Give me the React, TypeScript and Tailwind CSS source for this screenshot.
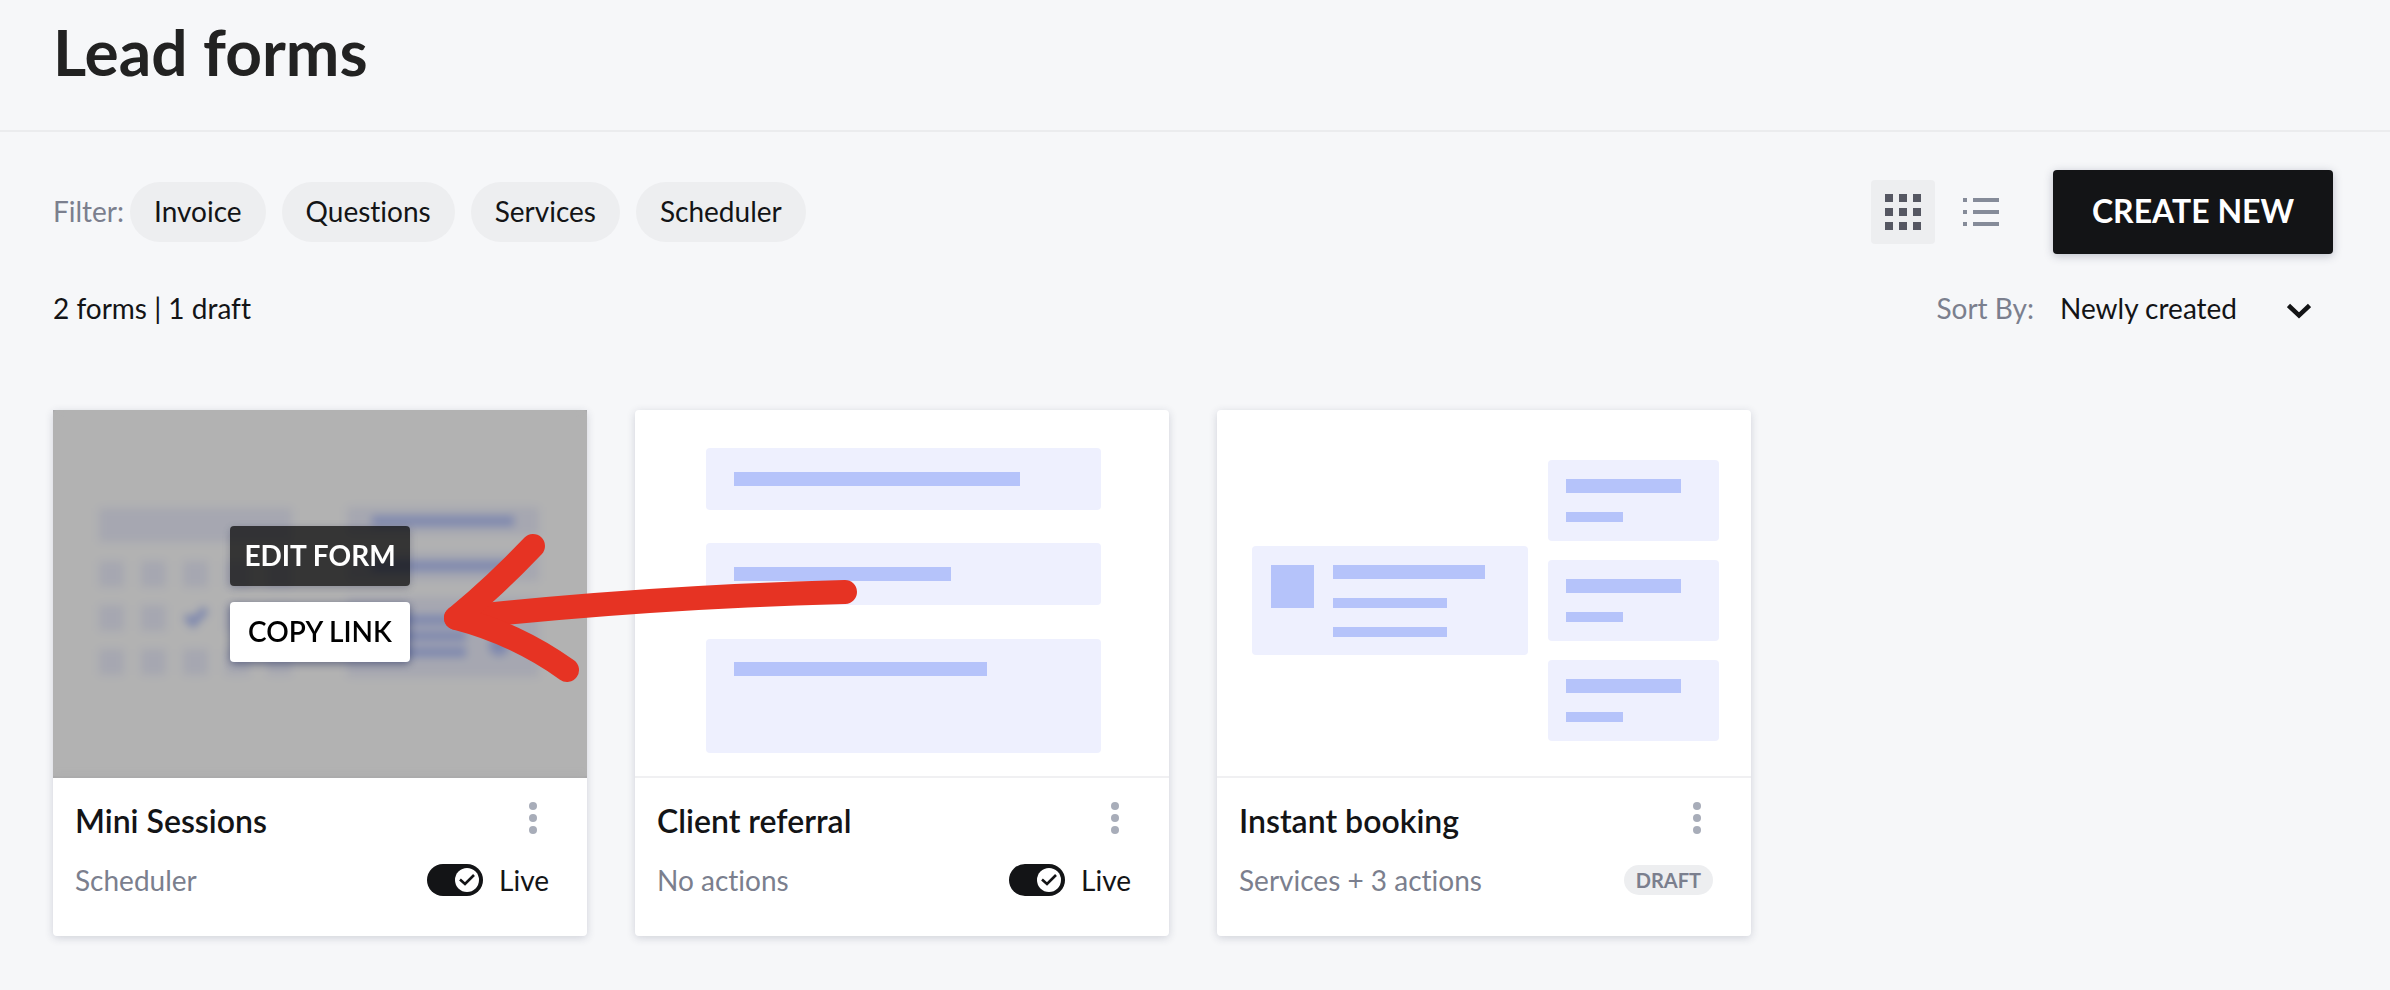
import { useState } from "react";
import type { ReactNode } from "react";

const filters = ["Invoice", "Questions", "Services", "Scheduler"];

function SchedulerPreview() {
  const columns = [46, 88, 130, 172, 214];
  const rows = [151, 195, 239];

  return (
    <svg viewBox="0 0 534 366" className="block w-full" aria-hidden="true">
      <rect x="46" y="98" width="193" height="34" fill="#eef0fe" />
      {rows.map((y) =>
        columns.map((x) =>
          x === 130 && y === 195 ? null : (
            <rect key={`${x}-${y}`} x={x} y={y} width="25" height="26" fill="#eef0fe" />
          )
        )
      )}
      <path d="M133 206l7 7 13-14" fill="none" stroke="#b5c3fa" strokeWidth="8" />
      <rect x="294" y="97" width="192" height="28" fill="#eef0fe" />
      <rect x="319" y="106" width="142" height="10" fill="#b5c3fa" />
      <rect x="294" y="142" width="192" height="29" fill="#eef0fe" />
      <rect x="319" y="151" width="142" height="10" fill="#b5c3fa" />
      <rect x="294" y="187" width="192" height="80" fill="#eef0fe" />
      <rect x="319" y="205" width="106" height="10" fill="#b5c3fa" />
      <rect x="319" y="221" width="94" height="10" fill="#b5c3fa" />
      <rect x="319" y="237" width="94" height="10" fill="#b5c3fa" />
      <circle cx="446" cy="236" r="10" fill="#b5c3fa" />
    </svg>
  );
}

function QuestionsPreview() {
  return (
    <svg viewBox="0 0 534 366" className="block w-full" aria-hidden="true">
      <rect x="71" y="38" width="395" height="62" rx="4" fill="#eef0fe" />
      <rect x="99" y="62" width="286" height="14" fill="#b5c3fa" />
      <rect x="71" y="133" width="395" height="62" rx="4" fill="#eef0fe" />
      <rect x="99" y="157" width="217" height="14" fill="#b5c3fa" />
      <rect x="71" y="229" width="395" height="114" rx="4" fill="#eef0fe" />
      <rect x="99" y="252" width="253" height="14" fill="#b5c3fa" />
    </svg>
  );
}

function BookingPreview() {
  return (
    <svg viewBox="0 0 534 366" className="block w-full" aria-hidden="true">
      <rect x="35" y="136" width="276" height="109" rx="4" fill="#eef0fe" />
      <rect x="54" y="155" width="43" height="43" fill="#b5c3fa" />
      <rect x="116" y="155" width="152" height="14" fill="#b5c3fa" />
      <rect x="116" y="188" width="114" height="10" fill="#b5c3fa" />
      <rect x="116" y="217" width="114" height="10" fill="#b5c3fa" />
      {[50, 150, 250].map((y) => (
        <g key={y}>
          <rect x="331" y={y} width="171" height="81" rx="4" fill="#eef0fe" />
          <rect x="349" y={y + 19} width="115" height="14" fill="#b5c3fa" />
          <rect x="349" y={y + 52} width="57" height="10" fill="#b5c3fa" />
        </g>
      ))}
    </svg>
  );
}

function LiveToggle({ id }: { id: string }) {
  const [live, setLive] = useState(true);

  return (
    <label htmlFor={id} className="flex cursor-pointer items-center gap-4">
      <span className="relative block h-8 w-14">
        <input
          id={id}
          type="checkbox"
          checked={live}
          onChange={() => setLive(!live)}
          className="peer block h-8 w-14 appearance-none rounded-full bg-[#a8adb9] checked:bg-[#131416]"
        />
        <svg
          viewBox="0 0 24 24"
          className="pointer-events-none absolute top-1 left-1 h-6 w-6 peer-checked:left-7"
          aria-hidden="true"
        >
          <circle cx="12" cy="12" r="12" fill="#fff" />
          <path d="M5 11.5l5 4.5 9-9" fill="none" stroke="#131416" strokeWidth="2.6" />
        </svg>
      </span>
      Live
    </label>
  );
}

type FormCardProps = {
  title: string;
  detail: string;
  preview: ReactNode;
  status: ReactNode;
  overlay?: ReactNode;
};

function FormCard({ title, detail, preview, status, overlay }: FormCardProps) {
  return (
    <article className="rounded bg-white shadow-[0_2px_8px_rgba(40,45,80,0.18)]">
      <div className="relative border-b-2 border-[#f0f0f2]">
        {preview}
        {overlay}
      </div>
      <div className="flex flex-col gap-4 pt-5 pr-[38px] pb-9 pl-[22px]">
        <div className="flex items-start justify-between">
          <h2 className="text-[32px] leading-[46px] font-semibold">{title}</h2>
          <button type="button" aria-label={`More options for ${title}`} className="flex h-10 w-8 justify-center pt-1">
            <svg viewBox="0 0 8 32" className="h-8 w-2" fill="#a8adb9" aria-hidden="true">
              <circle cx="4" cy="4" r="4" />
              <circle cx="4" cy="16" r="4" />
              <circle cx="4" cy="28" r="4" />
            </svg>
          </button>
        </div>
        <div className="flex h-10 items-center justify-between">
          <p className="text-[#7b7f8e]">{detail}</p>
          {status}
        </div>
      </div>
    </article>
  );
}

export default function App() {
  const [sort, setSort] = useState("new");

  return (
    <div className="min-h-screen bg-[#f6f7f9] font-[Lato,sans-serif] text-[28px] leading-10 text-[#131416] [font-variant-ligatures:none]">
      <header className="border-b-2 border-[#ebecee] px-[53px] pt-3 pb-[38px]">
        <h1 className="text-[64px] leading-[80px] font-bold text-[#222]">Lead forms</h1>
      </header>

      <main className="px-[53px] pt-[38px] pb-12">
        <div className="flex items-center justify-between pr-1">
          <div className="flex items-center">
            <span className="mr-1.5 pb-0.5 text-[#7b7f8e]">Filter:</span>
            <div className="flex gap-4">
              {filters.map((filter) => (
                <button key={filter} type="button" className="h-[60px] rounded-full bg-[#edeef0] px-6 pb-0.5">
                  {filter}
                </button>
              ))}
            </div>
          </div>

          <div className="flex items-center">
            <button
              type="button"
              aria-label="Grid view"
              className="flex size-16 items-center justify-center rounded bg-[#edeef0]"
            >
              <svg viewBox="0 0 36 36" className="size-9" fill="#555762" aria-hidden="true">
                {[0, 14, 28].map((y) => [0, 14, 28].map((x) => <rect key={`${x}-${y}`} x={x} y={y} width="8" height="8" />))}
              </svg>
            </button>
            <button type="button" aria-label="List view" className="ml-3.5 flex size-16 items-center justify-center">
              <svg viewBox="0 0 36 28" className="h-7 w-9" fill="#858b99" aria-hidden="true">
                {[0, 12, 24].map((y) => (
                  <g key={y}>
                    <rect x="0" y={y} width="4" height="4" />
                    <rect x="10" y={y} width="26" height="4" />
                  </g>
                ))}
              </svg>
            </button>
            <button
              type="button"
              className="ml-10 h-[84px] w-[280px] rounded bg-[#131416] pb-0.5 text-[32px] font-bold text-white shadow-[0_2px_10px_rgba(40,45,80,0.28)]"
            >
              CREATE NEW
            </button>
          </div>
        </div>

        <div className="mt-[34px] flex items-center justify-between pr-1">
          <p>2 forms | 1 draft</p>
          <div className="flex items-center">
            <label htmlFor="sort" className="mr-[26px] text-[#7b7f8e]">
              Sort By:
            </label>
            <div className="relative">
              <select
                id="sort"
                value={sort}
                onChange={(e) => setSort(e.target.value)}
                className="block h-10 w-[273px] appearance-none bg-transparent"
              >
                <option value="new">Newly created</option>
                <option value="old">Oldest</option>
                <option value="name">Name</option>
              </select>
              <svg
                viewBox="0 0 24 16"
                className="pointer-events-none absolute top-[15px] right-[22px] h-4 w-6"
                fill="none"
                stroke="#131416"
                strokeWidth="4.5"
                aria-hidden="true"
              >
                <path d="M1.5 2.5L12 12.5l10.5-10" />
              </svg>
            </div>
          </div>
        </div>

        <div className="relative mt-[82px] grid grid-cols-[repeat(auto-fill,534px)] gap-12">
          <FormCard
            title="Mini Sessions"
            detail="Scheduler"
            preview={<SchedulerPreview />}
            status={<LiveToggle id="live-mini" />}
            overlay={
              <div className="absolute inset-x-0 top-0 -bottom-0.5 flex flex-col items-center justify-center gap-4 bg-black/30 backdrop-blur-xs">
                <button
                  type="button"
                  className="h-[60px] w-[180px] rounded bg-black/70 pb-0.5 font-bold text-white shadow-[0_2px_8px_rgba(40,45,80,0.3)]"
                >
                  EDIT FORM
                </button>
                <button
                  type="button"
                  className="h-[60px] w-[180px] rounded bg-white pb-0.5 font-semibold text-black shadow-[0_2px_8px_rgba(20,30,80,0.5)]"
                >
                  COPY LINK
                </button>
              </div>
            }
          />
          <FormCard
            title="Client referral"
            detail="No actions"
            preview={<QuestionsPreview />}
            status={<LiveToggle id="live-referral" />}
          />
          <FormCard
            title="Instant booking"
            detail="Services + 3 actions"
            preview={<BookingPreview />}
            status={
              <span className="rounded-full bg-[#edeef0] px-3 text-[20px] leading-[30px] font-bold text-[#7b7f8e]">
                DRAFT
              </span>
            }
          />

          {/* Hand-drawn pointer to the copy link button */}
          <svg
            viewBox="0 0 440 160"
            className="pointer-events-none absolute top-[120px] left-[380px] h-[160px] w-[440px]"
            fill="none"
            stroke="#e63323"
            strokeWidth="24"
            strokeLinecap="round"
            strokeLinejoin="round"
            aria-hidden="true"
          >
            <path d="M412 62Q216 67 23 88" />
            <path d="M100 16Q62 56 23 88Q84 104 134 140" />
          </svg>
        </div>
      </main>
    </div>
  );
}
